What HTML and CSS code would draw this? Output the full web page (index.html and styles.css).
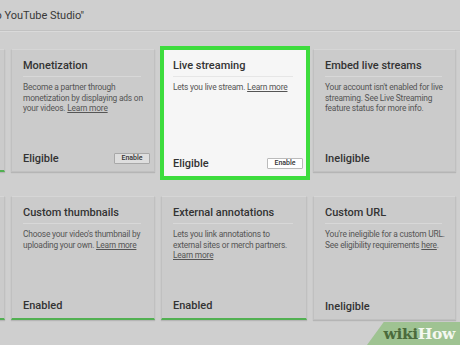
FILE: index.html
```html
<!DOCTYPE html>
<html lang="en">
<head>
  <meta charset="UTF-8" />
  <title>YouTube Studio | Features</title>
  <link rel="stylesheet" href="styles.css">
</head>
<body>

<div class="top-bar">
  <span class="crumb">to YouTube Studio"</span>
</div>

<div class="feature-grid">
  <!-- row 1 -->
  <div class="card stub enabled"></div>

  <div class="card">
    <div class="card-title">Monetization</div>
    <p class="card-text">Become a partner through monetization by displaying ads on your videos. <a href="#">Learn more</a></p>
    <div class="card-foot">
      <span class="status">Eligible</span>
      <button class="enable-btn">Enable</button>
    </div>
  </div>

  <div class="card active">
    <div class="card-title">Live streaming</div>
    <p class="card-text">Lets you live stream. <a href="#">Learn more</a></p>
    <div class="card-foot">
      <span class="status">Eligible</span>
      <button class="enable-btn">Enable</button>
    </div>
  </div>

  <div class="card">
    <div class="card-title">Embed live streams</div>
    <p class="card-text">Your account isn't enabled for live streaming. See Live Streaming feature status for more info.</p>
    <div class="card-foot">
      <span class="status">Ineligible</span>
    </div>
  </div>

  <!-- row 2 -->
  <div class="card stub enabled"></div>

  <div class="card enabled">
    <div class="card-title">Custom thumbnails</div>
    <p class="card-text">Choose your video's thumbnail by uploading your own. <a href="#">Learn more</a></p>
    <div class="card-foot">
      <span class="status">Enabled</span>
    </div>
  </div>

  <div class="card enabled">
    <div class="card-title">External annotations</div>
    <p class="card-text">Lets you link annotations to<br>external sites or merch partners.<br><a href="#">Learn more</a></p>
    <div class="card-foot">
      <span class="status">Enabled</span>
    </div>
  </div>

  <div class="card">
    <div class="card-title">Custom URL</div>
    <p class="card-text">You're ineligible for a custom URL.<br>See eligibility requirements <a href="#">here</a>.</p>
    <div class="card-foot">
      <span class="status">Ineligible</span>
    </div>
  </div>
</div>

<div class="watermark"><span class="wiki">wiki</span>How</div>

</body>
</html>
```

FILE: styles.css
```css
html, body {
  margin: 0;
  padding: 0;
  background: #cfcfcf;
  color: #333;
  font-family: Roboto, "Liberation Sans", sans-serif;
  height: 100%;
  overflow: hidden;
}

.top-bar {
  height: 30px;
  display: flex;
  align-items: center;
  border-bottom: 1px solid #c2c2c2;
  box-shadow: 0 1px 0 #dadada;
}

.crumb {
  font-size: 11px;
  color: #383838;
  margin-left: -8px;
}

.feature-grid {
  display: grid;
  grid-template-columns: 5px 144px 146px 143px;
  grid-template-rows: 123px 124px;
  column-gap: 6px;
  row-gap: 24px;
  margin-top: 18px;
}

.card {
  display: flex;
  flex-direction: column;
  background: #cbcbcb;
  border: 1px solid #c0c0c0;
  border-top-color: #d6d6d6;
  box-shadow: 0 1px 1px rgba(0, 0, 0, 0.12);
  padding: 9px 4px 5px 11px;
  box-sizing: border-box;
}

.card.stub {
  padding: 0;
  border-left: none;
}

.card.enabled {
  border-bottom: 2px solid #52b052;
}

.card.active {
  background: #f6f6f6;
  border: none;
  box-shadow: 0 0 3px rgba(80, 230, 80, 0.6);
  outline: 4px solid #3ddc3d;
  margin: 1px 1px -4px 3px;
  padding: 9px 3px 5px 9px;
}

.card-title {
  font-size: 11px;
  font-weight: 500;
  line-height: 14px;
  color: #333;
  padding-bottom: 3px;
  border-bottom: 1px solid #d8d8d8;
  margin-right: 9px;
}

.card.active .card-title {
  border-bottom-color: #e6e6e6;
  margin-right: 10px;
}

.card-text {
  margin: 5px 0 0;
  font-size: 8.4px;
  letter-spacing: -0.2px;
  line-height: 10.6px;
  color: #555;
  flex: 1;
}

.card-text a {
  color: #555;
  text-decoration: underline;
}

.card-foot {
  display: flex;
  justify-content: space-between;
  align-items: center;
  height: 16px;
}

.status {
  font-size: 11px;
  font-weight: 500;
  color: #333;
}

.enable-btn {
  font-family: Roboto, "Liberation Sans", sans-serif;
  font-size: 7px;
  font-weight: 500;
  color: #333;
  background: #dedede;
  border: 1px solid #a8a8a8;
  border-radius: 1px;
  width: 36px;
  height: 11px;
  padding: 0;
  line-height: 9px;
}

.card.active .enable-btn {
  background: #fff;
  border-color: #bbb;
}

.watermark {
  position: absolute;
  right: 0;
  bottom: 0;
  width: 93px;
  height: 23px;
  background: #9fc392;
  clip-path: polygon(18% 0, 100% 0, 100% 100%, 0 100%);
  font-family: "DejaVu Serif", "Liberation Serif", serif;
  font-weight: bold;
  font-size: 15.5px;
  line-height: 23px;
  color: #f4f8f0;
  text-align: right;
  padding-right: 5px;
  box-sizing: border-box;
  letter-spacing: -0.4px;
}

.watermark .wiki {
  color: #4b6b3c;
}
```
